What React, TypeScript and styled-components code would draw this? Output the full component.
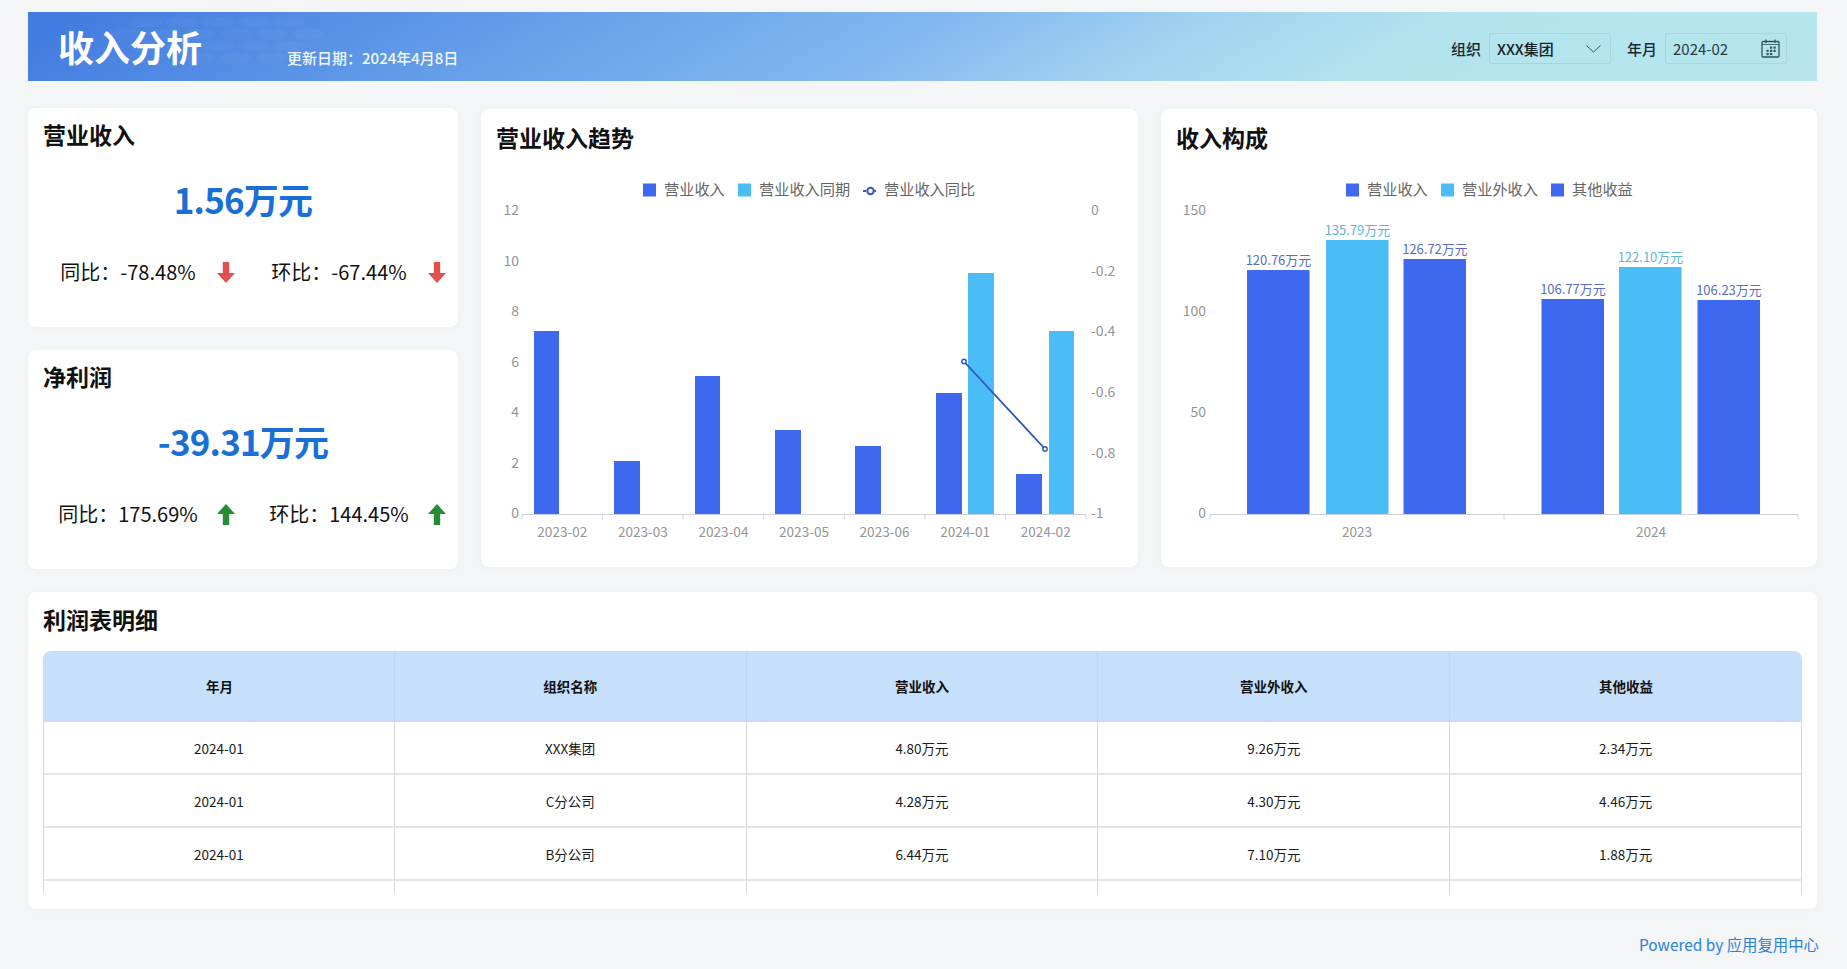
import React from "react";
import styled, { createGlobalStyle } from "styled-components";

const BLUE = "#3e68ed";
const CYAN = "#4abdf6";
const AXIS = "#ccd3dc";
const TICK = "#959595";
const BASE = 514;
const COLON = "\uFF1A";

const GlobalStyle = createGlobalStyle`
  html, body {
    margin: 0;
    padding: 0;
    background: #f3f5f7;
  }
  body {
    font-family: "Noto Sans CJK SC", "Noto Sans", sans-serif;
    color: #111;
  }
  svg text {
    font-family: "Noto Sans CJK SC", "Noto Sans", sans-serif;
  }
`;

const Page = styled.div`
  width: 1847px;
  height: 969px;
  box-sizing: border-box;
  padding: 12px 30px 0 28px;
  overflow: hidden;
`;

const Banner = styled.header`
  position: relative;
  height: 69px;
  display: flex;
  align-items: center;
  padding: 0 30px;
  background: linear-gradient(150deg, #437ce0 3%, #659fe9 27.5%, #84b8f0 49%, #a0d2f0 62%, #b3e3ee 75%, #b6e6ec 97%);
  overflow: hidden;
`;

const Honeycomb = styled.svg`
  position: absolute;
  left: 70px;
  top: 0;
`;

const BannerTitle = styled.h1`
  margin: -2px 0 0;
  font-size: 36px;
  line-height: 50px;
  font-weight: 700;
  color: #fff;
  width: 229px;
  position: relative;
`;

const BannerDate = styled.span`
  font-size: 15px;
  font-weight: 500;
  color: #f2f7ff;
  margin-top: 22px;
  position: relative;
`;

const Filters = styled.div`
  margin-left: auto;
  display: flex;
  align-items: center;
  margin-top: 4px;
`;

const FilterLabel = styled.label`
  font-size: 15px;
  font-weight: 500;
  color: #1a2a30;
  margin-right: 8px;
`;

const FilterBox = styled.div<{ $gap: number }>`
  box-sizing: border-box;
  width: 122px;
  height: 31px;
  display: flex;
  align-items: center;
  justify-content: space-between;
  padding: 0 6px 0 7px;
  margin-right: ${(p) => p.$gap}px;
  border: 1px solid rgba(90, 130, 160, 0.16);
  border-radius: 2px;
  font-size: 15px;
  color: #2b3a40;
`;

const SelectValue = styled.span`
  font-weight: 500;
  color: #14242a;
`;

const Columns = styled.div`
  display: grid;
  grid-template-columns: 430px 657px 656px;
  column-gap: 23px;
  margin-top: 27px;
  height: 460px;
`;

const StatColumn = styled.div`
  display: flex;
  flex-direction: column;
  gap: 23px;
`;

const Card = styled.section`
  background: #fff;
  border-radius: 8px;
  box-shadow: 0 1px 6px rgba(120, 130, 150, 0.05);
`;

const StatCard = styled(Card)`
  height: 219px;
  padding: 11px 0 0 15px;
  box-sizing: border-box;
`;

const ChartCard = styled(Card)`
  height: 458px;
  margin-top: 1px;
  padding-top: 13px;
  box-sizing: border-box;
`;

const Title = styled.h2`
  margin: 0;
  font-size: 23px;
  line-height: 30px;
  font-weight: 700;
  color: #111;
`;

const ChartTitle = styled(Title)`
  padding-left: 15px;
  margin-bottom: 8px;
`;

const StatValue = styled.div`
  margin: 25px 15px 0 0;
  text-align: center;
  font-size: 35px;
  line-height: 50px;
  font-weight: 700;
  color: #1a6fd6;
  letter-spacing: -0.8px;
`;

const StatRow = styled.div`
  display: flex;
  gap: 15px;
  margin-top: 34px;
`;

const StatItem = styled.div`
  display: grid;
  grid-template-columns: 170px 26px;
  align-items: center;
  font-size: 20px;
  line-height: 28px;
  color: #111;
  text-align: center;
  white-space: nowrap;
`;

const ArrowIcon = styled.svg`
  display: block;
  margin: 0 auto;
`;

const ChartSvg = styled.svg`
  display: block;
`;

const TableCard = styled(Card)`
  height: 317px;
  margin-top: 24px;
  padding: 12px 15px 0 15px;
  box-sizing: border-box;
`;

const TableTitle = styled(Title)`
  margin-bottom: 17px;
`;

const TableClip = styled.div`
  height: 243px;
  overflow: hidden;
  border-radius: 8px 8px 0 0;
`;

const DataTable = styled.table`
  width: 100%;
  table-layout: fixed;
  border-collapse: separate;
  border-spacing: 0;
  font-size: 13.5px;
`;

const HeadCell = styled.th`
  height: 71px;
  padding: 0 0 2px;
  box-sizing: border-box;
  background: linear-gradient(180deg, #c6dffb 0%, #c6dffb 90%, #cadcf8 100%);
  border-right: 1px solid #bfd6f2;
  font-weight: 700;
  color: #111;
  &:first-child {
    padding-left: 2px;
  }
  &:last-child {
    border-right: none;
  }
`;

const BodyCell = styled.td`
  height: 51px;
  padding: 0;
  text-align: center;
  color: #1a1a1a;
  border-bottom: 2px solid #e3e5e8;
  border-right: 1px solid #d6d8db;
  &:first-child {
    border-left: 1px solid #d6d8db;
  }
`;

const Footer = styled.div`
  margin: 23px -2px 0 0;
  text-align: right;
  font-size: 15.4px;
  line-height: 24px;
  color: #2b80dc;
`;

const Arrow = ({ up }: { up?: boolean }) => (
  <ArrowIcon width="18" height="21" viewBox="0 0 18 21">
    {up ? (
      <path d="M9 0 L18 10 H12.2 V21 H5.8 V10 H0 Z" fill="#258c35" />
    ) : (
      <path d="M5.8 0 H12.2 V11 H18 L9 21 L0 11 H5.8 Z" fill="#e14f4f" />
    )}
  </ArrowIcon>
);

const Chevron = () => (
  <svg width="19" height="16" viewBox="0 0 19 16" fill="none">
    <path d="M1.5 4.5 L8.5 11 L15.5 4.5" stroke="#3d5660" strokeWidth="1" />
  </svg>
);

const CalendarIcon = () => (
  <svg width="19" height="19" viewBox="0 0 19 19" fill="none">
    <rect x="1" y="2.5" width="17" height="15.5" rx="1" stroke="#33525c" strokeWidth="1.3" />
    <path d="M5 0.5 V4 M14 0.5 V4" stroke="#33525c" strokeWidth="1.3" />
    <path d="M1 5.5 H18" stroke="#33525c" strokeWidth="0.8" />
    <g fill="#33525c">
      <rect x="9" y="7.5" width="2.2" height="2.2" />
      <rect x="12.5" y="7.5" width="2.2" height="2.2" />
      <rect x="5.5" y="10.8" width="2.2" height="2.2" />
      <rect x="9" y="10.8" width="2.2" height="2.2" />
      <rect x="12.5" y="10.8" width="2.2" height="2.2" />
      <rect x="5.5" y="14" width="2.2" height="2.2" />
      <rect x="9" y="14" width="2.2" height="2.2" />
    </g>
  </svg>
);

const hexCells = [
  [48, 10], [84, 10], [120, 10], [156, 10], [192, 10],
  [30, 22], [66, 22], [102, 22], [138, 22], [174, 22], [210, 22],
  [48, 34], [84, 34], [120, 34], [156, 34], [192, 34],
  [102, 46], [138, 46], [174, 46],
];

const HoneycombArt = () => (
  <Honeycomb width="260" height="69" viewBox="0 0 260 69">
    {hexCells.map(([x, y]) => (
      <path
        key={`${x}-${y}`}
        d={`M${x - 17} ${y} L${x - 10} ${y - 5} H${x + 10} L${x + 17} ${y} L${x + 10} ${y + 5} H${x - 10} Z`}
        fill="#ffffff"
        fillOpacity="0.03"
      />
    ))}
  </Honeycomb>
);

const LegendSwatch = ({ x, y, color, label }: { x: number; y: number; color: string; label: string }) => (
  <g>
    <rect x={x} y={y - 6.5} width="13" height="13" fill={color} />
    <text x={x + 21} y={y + 5} fontSize="15.2" fill="#666">
      {label}
    </text>
  </g>
);

const trendBars = [
  { x: 534, top: 331, w: 25, color: BLUE },
  { x: 614, top: 461, w: 26, color: BLUE },
  { x: 695, top: 376, w: 25, color: BLUE },
  { x: 775, top: 430, w: 26, color: BLUE },
  { x: 855, top: 446, w: 26, color: BLUE },
  { x: 936, top: 393, w: 26, color: BLUE },
  { x: 968, top: 273, w: 26, color: CYAN },
  { x: 1016, top: 474, w: 26, color: BLUE },
  { x: 1049, top: 331, w: 25, color: CYAN },
];

const months = ["2023-02", "2023-03", "2023-04", "2023-05", "2023-06", "2024-01", "2024-02"];
const leftTicks = [
  ["12", 210], ["10", 261], ["8", 311], ["6", 362], ["4", 412], ["2", 463], ["0", 513],
] as const;
const rightTicks = [
  ["0", 210], ["-0.2", 271], ["-0.4", 331], ["-0.6", 392], ["-0.8", 453], ["-1", 513],
] as const;

const TrendChart = () => (
  <ChartSvg width="657" height="400" viewBox="481 160 657 400">
    <LegendSwatch x={643} y={190} color={BLUE} label="营业收入" />
    <LegendSwatch x={738} y={190} color={CYAN} label="营业收入同期" />
    <path d="M863 191 H878" stroke="#3457c4" strokeWidth="2" strokeDasharray="3 2" />
    <circle cx="870.5" cy="191" r="3.2" fill="#fff" stroke="#3457c4" strokeWidth="2" />
    <text x={884} y={195} fontSize="15.2" fill="#666">
      营业收入同比
    </text>

    {leftTicks.map(([t, y]) => (
      <text key={t} x={519} y={y + 5} fontSize="14" fill={TICK} textAnchor="end">
        {t}
      </text>
    ))}
    {rightTicks.map(([t, y]) => (
      <text key={t} x={1091} y={y + 5} fontSize="14" fill={TICK}>
        {t}
      </text>
    ))}

    {trendBars.map((b) => (
      <rect key={b.x} x={b.x} y={b.top} width={b.w} height={BASE - b.top} fill={b.color} />
    ))}

    <path d={`M522 ${BASE}.5 H1086`} stroke={AXIS} strokeWidth="1.2" />
    {months.map((m, i) => (
      <g key={m}>
        <path d={`M${522 + i * 80.57} ${BASE}.5 v5`} stroke={AXIS} />
        <text x={562.3 + i * 80.57} y={537} fontSize="13.6" fill={TICK} textAnchor="middle">
          {m}
        </text>
      </g>
    ))}
    <path d={`M1086 ${BASE}.5 v5`} stroke={AXIS} />

    <path d="M964 361.5 L1045 449" stroke="#2f57c4" strokeWidth="1.8" />
    <circle cx="964" cy="361.5" r="2.2" fill="#fff" stroke="#2f57c4" strokeWidth="1.4" />
    <circle cx="1045" cy="449" r="2.2" fill="#fff" stroke="#2f57c4" strokeWidth="1.4" />
  </ChartSvg>
);

const compositionBars = [
  { x: 1247, top: 270, color: BLUE, label: "120.76万元" },
  { x: 1326, top: 240, color: CYAN, label: "135.79万元" },
  { x: 1403.5, top: 259, color: BLUE, label: "126.72万元" },
  { x: 1541.5, top: 299, color: BLUE, label: "106.77万元" },
  { x: 1619, top: 267, color: CYAN, label: "122.10万元" },
  { x: 1697.5, top: 300, color: BLUE, label: "106.23万元" },
];

const CompositionChart = () => (
  <ChartSvg width="656" height="400" viewBox="1161 160 656 400">
    <LegendSwatch x={1346} y={190} color={BLUE} label="营业收入" />
    <LegendSwatch x={1441} y={190} color={CYAN} label="营业外收入" />
    <LegendSwatch x={1551} y={190} color={BLUE} label="其他收益" />

    {[["150", 210], ["100", 311], ["50", 412], ["0", 513]].map(([t, y]) => (
      <text key={t} x={1206} y={Number(y) + 5} fontSize="14" fill={TICK} textAnchor="end">
        {t}
      </text>
    ))}

    {compositionBars.map((b) => (
      <g key={b.x}>
        <rect x={b.x} y={b.top} width="62.5" height={BASE - b.top} fill={b.color} />
        <text
          x={b.x + 31.5}
          y={b.top - 5}
          fontSize="13"
          fill={b.color === CYAN ? "#5cb6d6" : "#5a6cc4"}
          textAnchor="middle"
        >
          {b.label}
        </text>
      </g>
    ))}

    <path d={`M1210 ${BASE}.5 H1798`} stroke={AXIS} strokeWidth="1.2" />
    {[1210, 1504, 1798].map((x) => (
      <path key={x} d={`M${x} ${BASE}.5 v5`} stroke={AXIS} />
    ))}
    <text x={1357} y={537} fontSize="13.6" fill={TICK} textAnchor="middle">
      2023
    </text>
    <text x={1651} y={537} fontSize="13.6" fill={TICK} textAnchor="middle">
      2024
    </text>
  </ChartSvg>
);

const columns = ["年月", "组织名称", "营业收入", "营业外收入", "其他收益"];
const rows = [
  ["2024-01", "XXX集团", "4.80万元", "9.26万元", "2.34万元"],
  ["2024-01", "C分公司", "4.28万元", "4.30万元", "4.46万元"],
  ["2024-01", "B分公司", "6.44万元", "7.10万元", "1.88万元"],
  ["", "", "", "", ""],
];

export default function App() {
  return (
    <Page>
      <GlobalStyle />
      <Banner>
        <HoneycombArt />
        <BannerTitle>收入分析</BannerTitle>
        <BannerDate>更新日期{COLON}2024年4月8日</BannerDate>
        <Filters>
          <FilterLabel>组织</FilterLabel>
          <FilterBox $gap={16}>
            <SelectValue>XXX集团</SelectValue>
            <Chevron />
          </FilterBox>
          <FilterLabel>年月</FilterLabel>
          <FilterBox $gap={0}>
            <span>2024-02</span>
            <CalendarIcon />
          </FilterBox>
        </Filters>
      </Banner>

      <Columns>
        <StatColumn>
          <StatCard>
            <Title>营业收入</Title>
            <StatValue>1.56万元</StatValue>
            <StatRow>
              <StatItem>
                <span>同比{COLON}-78.48%</span>
                <Arrow />
              </StatItem>
              <StatItem>
                <span>环比{COLON}-67.44%</span>
                <Arrow />
              </StatItem>
            </StatRow>
          </StatCard>
          <StatCard>
            <Title>净利润</Title>
            <StatValue>-39.31万元</StatValue>
            <StatRow>
              <StatItem>
                <span>同比{COLON}175.69%</span>
                <Arrow up />
              </StatItem>
              <StatItem>
                <span>环比{COLON}144.45%</span>
                <Arrow up />
              </StatItem>
            </StatRow>
          </StatCard>
        </StatColumn>

        <ChartCard>
          <ChartTitle>营业收入趋势</ChartTitle>
          <TrendChart />
        </ChartCard>

        <ChartCard>
          <ChartTitle>收入构成</ChartTitle>
          <CompositionChart />
        </ChartCard>
      </Columns>

      <TableCard>
        <TableTitle>利润表明细</TableTitle>
        <TableClip>
          <DataTable>
            <thead>
              <tr>
                {columns.map((c) => (
                  <HeadCell key={c}>{c}</HeadCell>
                ))}
              </tr>
            </thead>
            <tbody>
              {rows.map((r, i) => (
                <tr key={i}>
                  {r.map((v, j) => (
                    <BodyCell key={j}>{v}</BodyCell>
                  ))}
                </tr>
              ))}
            </tbody>
          </DataTable>
        </TableClip>
      </TableCard>

      <Footer>Powered by 应用复用中心</Footer>
    </Page>
  );
}
